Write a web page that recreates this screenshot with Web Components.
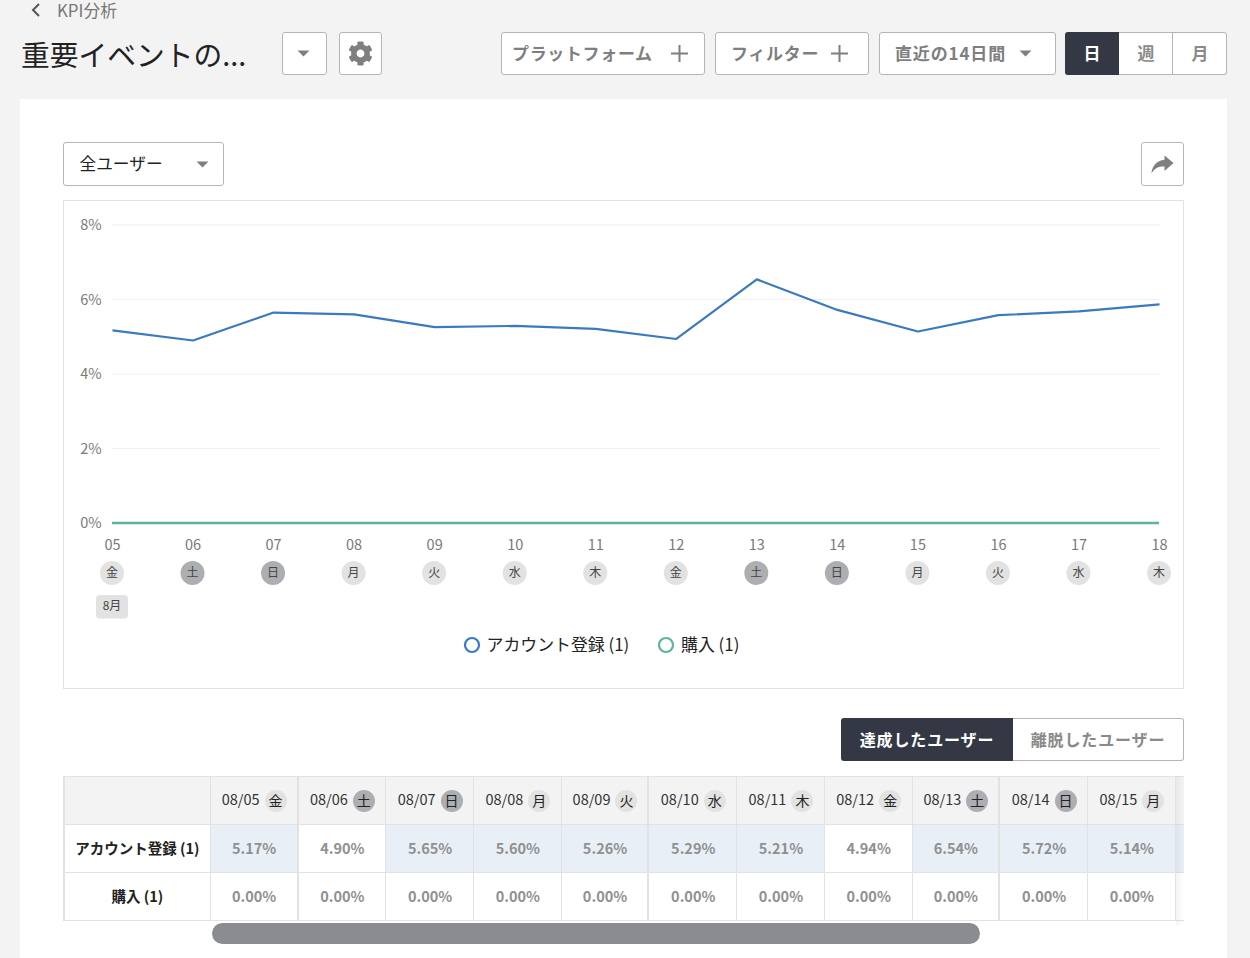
<!DOCTYPE html>
<html lang="ja"><head><meta charset="utf-8"><title>KPI分析</title>
<style>
html,body{margin:0;padding:0;height:958px;overflow:hidden;background:#f3f3f3;font-family:"Noto Sans CJK JP","Noto Sans",sans-serif;color:#222}
</style></head><body>
<kpi-page></kpi-page>
<script>
const FONT='"Noto Sans CJK JP","Noto Sans",sans-serif';
const caret=(c='#7f7f7f')=>`<svg width="13" height="7" viewBox="0 0 13 7"><path d="M0.5 0.5h12L6.5 6.5z" fill="${c}"/></svg>`;
const plus=`<svg width="19" height="19" viewBox="0 0 19 19"><path d="M9.5 1v17M1 9.5h17" stroke="#7f7f7f" stroke-width="2" fill="none"/></svg>`;
const gear=`<svg width="25" height="25" viewBox="0 0 512 512"><path fill="#7f7f7f" d="M487.4 315.7l-42.6-24.6c4.3-23.2 4.3-47 0-70.2l42.6-24.6c4.9-2.8 7.1-8.6 5.5-14-11.1-35.6-30-67.8-54.7-94.6-3.8-4.1-10-5.1-14.8-2.3L380.8 110c-17.9-15.4-38.5-27.3-60.8-35.1V25.8c0-5.6-3.9-10.5-9.4-11.7-36.7-8.2-74.3-7.8-109.2 0-5.5 1.2-9.4 6.1-9.4 11.7V75c-22.2 7.9-42.8 19.8-60.8 35.1L88.7 85.5c-4.9-2.8-11-1.9-14.8 2.3-24.7 26.7-43.6 58.9-54.7 94.6-1.7 5.4.6 11.2 5.5 14L67.3 221c-4.3 23.2-4.3 47 0 70.2l-42.6 24.6c-4.9 2.8-7.1 8.6-5.5 14 11.1 35.6 30 67.8 54.7 94.6 3.8 4.1 10 5.1 14.8 2.3l42.6-24.6c17.9 15.4 38.5 27.3 60.8 35.1v49.2c0 5.6 3.9 10.5 9.4 11.7 36.7 8.2 74.3 7.8 109.2 0 5.5-1.2 9.4-6.1 9.4-11.7v-49.2c22.2-7.9 42.8-19.8 60.8-35.1l42.6 24.6c4.9 2.8 11 1.9 14.8-2.3 24.7-26.7 43.6-58.9 54.7-94.6 1.5-5.5-.7-11.3-5.6-14.1zM256 336c-44.1 0-80-35.9-80-80s35.9-80 80-80 80 35.9 80 80-35.9 80-80 80z"/></svg>`;
const share=`<svg width="23" height="19" viewBox="0 0 23 19"><path fill="#7f7f7f" d="M13.5 0.5L22.5 8l-9 8v-4.6C7.5 11.3 3.5 13 0.5 18.5 1 11 5.5 5.6 13.5 4.7z"/></svg>`;

function def(name,css,html){
  customElements.define(name,class extends HTMLElement{
    constructor(){super();const r=this.attachShadow({mode:'open'});
      r.innerHTML=`<style>${css}</style>`+(typeof html==='function'?html(this):html);}
  });
}

def('tool-btn',`:host{display:inline-flex;align-items:center;box-sizing:border-box;height:43px;background:#fff;border:1px solid #b5b5b5;border-radius:3px;color:#7f7f7f;font:700 17px/1 ${FONT};letter-spacing:.85px;white-space:nowrap}`,`<slot></slot>`);

def('kpi-header',`
:host{display:block;height:99px;box-sizing:border-box}
.crumb{height:32px;display:flex;align-items:flex-start;gap:15px;padding-left:30px;color:#777;font:400 16.8px/20px ${FONT}}
.crumb svg{margin-top:2px}
.row{display:flex;align-items:center;height:43px}
h1{margin:0 0 0 21px;width:261px;font:400 28.75px/43px ${FONT};color:#222;white-space:nowrap}
tool-btn span{margin-bottom:2px}
.b1{width:45px;justify-content:center;margin-right:12px;padding-right:2px}
.b2{width:43px;justify-content:center;margin-right:119px;padding-left:.5px}
.b3{width:204px;padding:0 15px 0 10px;justify-content:space-between;margin-right:10px;letter-spacing:.65px}
.b4{width:154px;padding:0 19px 0 15px;justify-content:space-between;margin-right:10px;letter-spacing:.7px}
.b5{width:177px;padding:0 23px 0 15px;justify-content:space-between;margin-right:9px}
`,`<div class="crumb"><svg width="12" height="16" viewBox="0 0 12 16"><path d="M9 2L3 8l6 6" fill="none" stroke="#555" stroke-width="2"/></svg><span>KPI分析</span></div>
<div class="row"><h1>重要イベントの...</h1>
<tool-btn class="b1">${caret()}</tool-btn><tool-btn class="b2">${gear}</tool-btn>
<tool-btn class="b3"><span>プラットフォーム</span>${plus}</tool-btn>
<tool-btn class="b4"><span>フィルター</span>${plus}</tool-btn>
<tool-btn class="b5"><span>直近の14日間</span>${caret()}</tool-btn>
<seg-day></seg-day></div>`);

def('seg-day',`
:host{display:flex;height:43px;box-sizing:border-box;width:162px;background:#fff;border-radius:3px;font:700 17px/1 ${FONT};color:#8a8a8a}
div{flex:1;display:flex;align-items:center;justify-content:center;box-sizing:border-box;border:1px solid #b5b5b5;border-left:0;padding:0 0 3px 1px}
.on{background:#333844;color:#fff;border-color:#333844;border-radius:3px 0 0 3px}
.e{border-radius:0 3px 3px 0}
`,`<div class="on">日</div><div>週</div><div class="e">月</div>`);

def('user-select',`
:host{display:flex;align-items:center;justify-content:space-between;box-sizing:border-box;width:161px;height:44px;padding:0 14px 0 15.5px;background:#fff;border:1px solid #b5b5b5;border-radius:3px;color:#222;font:400 16.7px/1 ${FONT}}
span{margin-bottom:2px}
`,`<span>全ユーザー</span>${caret()}`);

def('share-btn',`
:host{display:flex;align-items:center;justify-content:center;box-sizing:border-box;width:43px;height:44px;background:#fff;border:1px solid #b5b5b5;border-radius:3px}
`,share);

const vals=[5.17,4.90,5.65,5.60,5.26,5.29,5.21,4.94,6.54,5.72,5.14,5.58,5.68,5.87];
const wk=['金','土','日','月','火','水','木','金','土','日','月','火','水','木'];
const days=['05','06','07','08','09','10','11','12','13','14','15','16','17','18'];

def('kpi-chart',`
:host{display:block;box-sizing:border-box;height:489px;border:1px solid #e2e2e2;background:#fff;position:relative}
svg{display:block;position:absolute;left:0;top:0}
text{font-family:${FONT}}
`,()=>{
  const X=i=>48.5+80.54*i, Y=v=>322-37.25*v;
  let s='';
  for(const v of [2,4,6,8]) s+=`<line x1="48" x2="1096" y1="${Y(v)}" y2="${Y(v)}" stroke="#f1f1f1"/>`;
  for(const v of [0,2,4,6,8]) s+=`<text x="37.7" y="${Y(v)+5.2}" text-anchor="end" font-size="14.5" fill="#7a7a7a">${v}%</text>`;
  s+=`<polyline fill="none" stroke="#3a7abf" stroke-width="2.2" stroke-linejoin="round" points="${vals.map((v,i)=>X(i)+','+Y(v)).join(' ')}"/>`;
  s+=`<line x1="48" x2="1095" y1="322" y2="322" stroke="#5db598" stroke-width="2.4"/>`;
  days.forEach((d,i)=>{
    const x=X(i), we=wk[i]==='土'||wk[i]==='日';
    s+=`<text x="${x}" y="349" text-anchor="middle" font-size="14.5" fill="#7a7a7a">${d}</text>`;
    s+=`<circle cx="${x-0.5}" cy="372" r="12" fill="${we?'#adaeb1':'#e2e2e2'}"/>`;
    s+=`<text x="${x-0.5}" y="375.7" text-anchor="middle" font-size="12" fill="#444">${wk[i]}</text>`;
  });
  s+=`<rect x="32" y="394" width="32" height="23.5" rx="4" fill="#e2e2e2"/><text x="48" y="409" text-anchor="middle" font-size="12" fill="#444">8月</text>`;
  s+=`<circle cx="408" cy="444" r="7" fill="none" stroke="#3a7abf" stroke-width="2.2"/><text x="422.5" y="449.5" font-size="16.9" fill="#222">アカウント登録 (1)</text>`;
  s+=`<circle cx="602" cy="444" r="7" fill="none" stroke="#5db598" stroke-width="2.2"/><text x="617" y="449.5" font-size="16.9" fill="#222">購入 (1)</text>`;
  return `<svg width="1119" height="487" viewBox="0 0 1119 487">${s}</svg>`;
});

def('result-toggle',`
:host{display:flex;justify-content:flex-end;height:43px;font:700 16px/1 ${FONT};letter-spacing:.85px}
div{display:flex;align-items:center;justify-content:center;box-sizing:border-box;height:43px;padding-bottom:2px}
.on{width:172px;background:#333844;color:#fff;border-radius:3px 0 0 3px}
.off{width:171px;background:#fff;color:#8a8a8a;border:1px solid #b5b5b5;border-left:0;border-radius:0 3px 3px 0}
`,`<div class="on">達成したユーザー</div><div class="off">離脱したユーザー</div>`);

const rowA=[['5.17%',1],['4.90%',0],['5.65%',1],['5.60%',1],['5.26%',1],['5.29%',1],['5.21%',1],['4.94%',0],['6.54%',1],['5.72%',1],['5.14%',1],['',1]];
def('kpi-table',`
:host{display:block;position:relative;overflow:hidden;width:1121px;height:149px;font:400 14.5px/1 ${FONT}}
.g{display:grid;grid-template-columns:145.8px repeat(12,87.72px);grid-auto-rows:48px;width:max-content;border-left:2px solid #e2e2e2;border-top:1px solid #e2e2e2;box-sizing:border-box}
.c{box-sizing:border-box;display:flex;align-items:center;justify-content:center;border-right:1px solid #e2e2e2;border-bottom:1px solid #e2e2e2;white-space:nowrap}
.wk{border-right:2px solid #e2e2e2}
.h{background:#f3f3f3;color:#333;gap:5px;padding-left:1px}
.h span:first-child{margin-bottom:2px}
.p{width:22px;height:22px;border-radius:50%;background:#e2e2e2;display:flex;align-items:center;justify-content:center;font-size:14px;color:#222;padding-bottom:2px;box-sizing:border-box}
.p.we{background:#adaeb1}
.l{background:#fff;font-weight:700;color:#222;font-size:14.5px;padding-bottom:1px}
.v{background:#fff;font-weight:700;color:#909090;padding:0 0 1px 1px}
.v.hi{background:#e9eff7}
.fade{position:absolute;right:0;top:0;bottom:0;width:8px;background:linear-gradient(90deg,rgba(0,0,0,.045),rgba(0,0,0,0))}
`,()=>{
  const lab=['08/05','08/06','08/07','08/08','08/09','08/10','08/11','08/12','08/13','08/14','08/15',''];
  const W=i=>(i===0||i===4||i===8)?' wk':'';
  let h=`<div class="c h"></div>`;
  lab.forEach((d,i)=>{const w=wk[i];h+=d?`<div class="c h${W(i)}"><span>${d}</span><span class="p${w==='土'||w==='日'?' we':''}">${w}</span></div>`:`<div class="c h"></div>`});
  h+=`<div class="c l">アカウント登録 (1)</div>`;
  rowA.forEach((r,i)=>h+=`<div class="c v${r[1]?' hi':''}${W(i)}">${r[0]}</div>`);
  h+=`<div class="c l">購入 (1)</div>`;
  lab.forEach((d,i)=>h+=`<div class="c v${W(i)}">${d?'0.00%':''}</div>`);
  return `<div class="g">${h}</div><div class="fade"></div>`;
});

def('h-scroll',`
:host{display:block;height:21px;margin:-2px 0 0 149px;width:768px;background:#8b8c90;border-radius:11px;position:relative}
`,``);

def('kpi-card',`
:host{display:block;margin:0 23px 0 20px;padding:43px 43px 0;background:#fff;height:859px;box-sizing:border-box}
.top{display:flex;justify-content:space-between;margin-bottom:14px}
result-toggle{margin:29px 0 15px}
`,`<div class="top"><user-select></user-select><share-btn></share-btn></div>
<kpi-chart></kpi-chart><result-toggle></result-toggle><kpi-table></kpi-table><h-scroll></h-scroll>`);

def('kpi-page',`:host{display:block;width:1250px;height:958px;overflow:hidden}`,`<kpi-header></kpi-header><kpi-card></kpi-card>`);
</script>
</body></html>
